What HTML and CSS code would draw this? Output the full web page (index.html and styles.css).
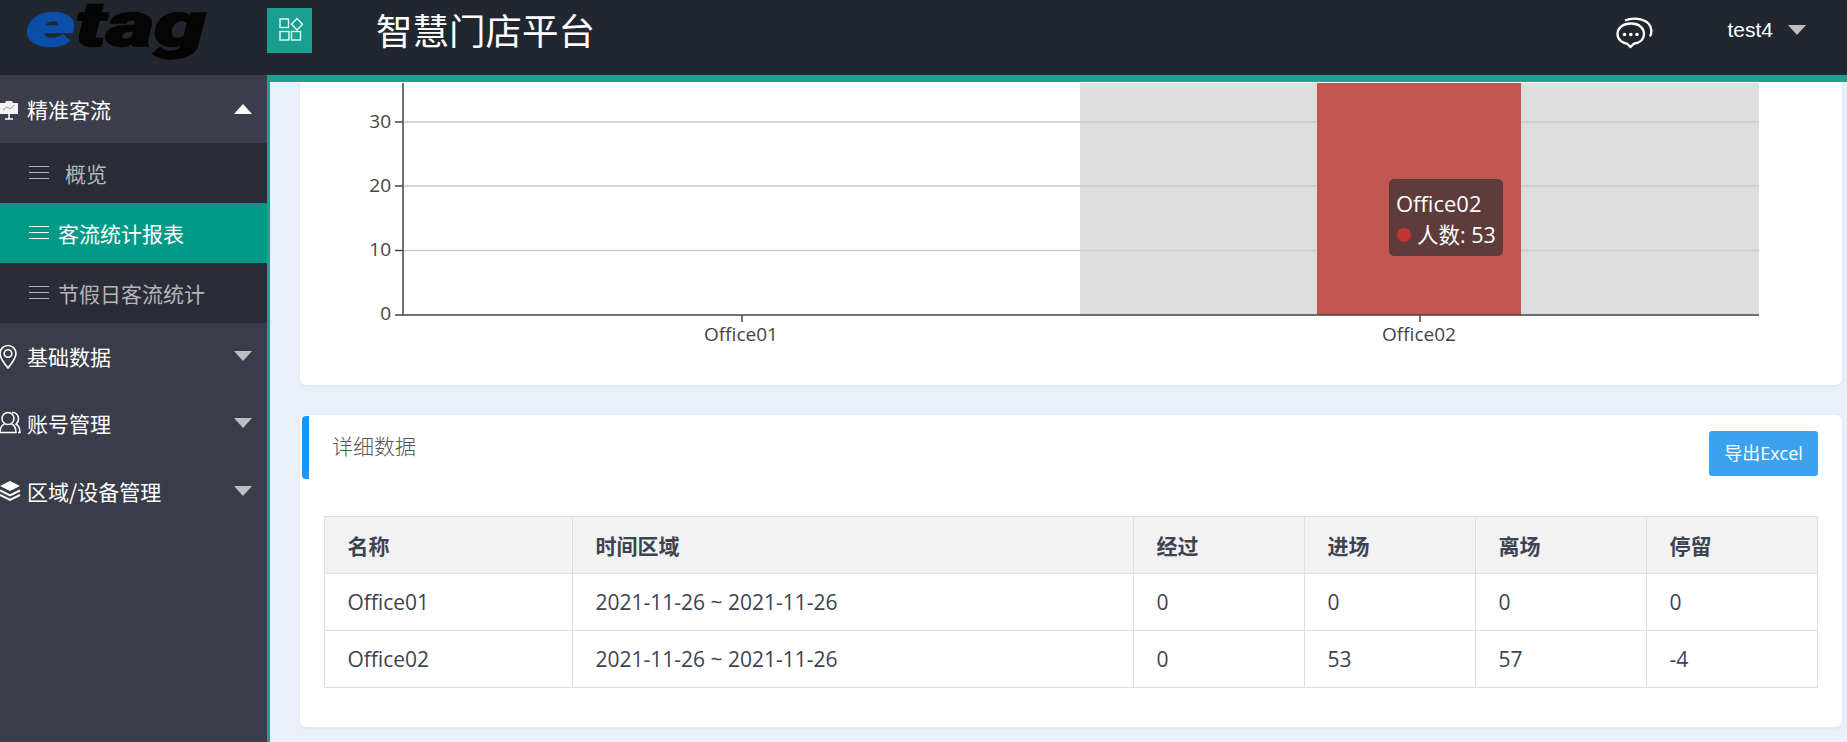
FILE: index.html
```html
<!DOCTYPE html>
<html lang="zh">
<head>
<meta charset="utf-8">
<title>智慧门店平台</title>
<link rel="stylesheet" href="styles.css">
</head>
<body>
<header class="topbar">
  <div class="logo"><div class="logo-word"><span class="logo-e">e</span>tag</div></div>
  <div class="apps">
    <svg class="apps-ico" width="26" height="26" viewBox="0 0 26 26" fill="none" stroke="#e4fff8" stroke-width="1.400"><rect x="2" y="3" width="8.500" height="8.500"/><path d="M19 2.500l5.500 5.800-5.500 5.800-5.500-5.800z"/><rect x="2" y="15.500" width="9" height="8.500"/><rect x="13.500" y="15.500" width="9" height="8.500"/></svg>
  </div>
  <div class="brand">智慧门店平台</div>
  <div class="top-right">
    <svg class="chat" width="37" height="32" viewBox="0 0 37 32" fill="none" stroke="#fff" stroke-width="2.300"><path d="M15 6.500C7 6.500 1.500 11 1.500 17c0 5.500 4.500 9 9.500 9.600l3.500 3.400 3.500-3.400c5.500-.8 10-4.200 10-9.600C28 11 23 6.500 15 6.500z"/><path d="M9 3.500C16 .5 27 1 32.500 6.500c3.500 4 3.500 9.500 1.500 13"/><circle cx="8.500" cy="17.500" r="1.800" fill="#fff" stroke="none"/><circle cx="14.800" cy="17.500" r="1.800" fill="#fff" stroke="none"/><circle cx="21" cy="17.500" r="1.800" fill="#fff" stroke="none"/></svg>
    <span class="user">test4</span>
    <span class="tri tri-down"></span>
  </div>
</header>
<div class="layout">
  <nav class="sidebar">
    <div class="nav-head nav-open">
      <svg class="nav-ico" width="22" height="22" viewBox="0 0 22 22"><path d="M1 5h5l1-2h6l1 2h5v11H1z" fill="#f4f4f4"/><path d="M4 12l4-3 3 2 5-4" fill="none" stroke="#999" stroke-width="1"/><path d="M10 15v6M6 21h8" stroke="#fff" stroke-width="1.500"/></svg>
      <span class="nav-text">精准客流</span>
      <span class="tri tri-up"></span>
    </div>
    <ul class="sub">
      <li class="sub-item"><span class="lines"></span><span class="sub-first">概览</span></li>
      <li class="sub-item sub-active"><span class="lines"></span><span>客流统计报表</span></li>
      <li class="sub-item"><span class="lines"></span><span>节假日客流统计</span></li>
    </ul>
    <div class="nav-head">
      <svg class="nav-ico" width="22" height="25" viewBox="0 0 22 25" fill="none" stroke="#fff" stroke-width="1.600"><path d="M9 24C4 18 1 14 1 9.500a8 8 0 0 1 16 0C17 14 14 18 9 24z"/><circle cx="9" cy="9.500" r="3.800"/></svg>
      <span class="nav-text">基础数据</span>
      <span class="tri tri-down"></span>
    </div>
    <div class="nav-head nav-account">
      <svg class="nav-ico" width="22" height="23" viewBox="0 0 22 23" fill="none" stroke="#fff" stroke-width="1.500"><circle cx="9" cy="7.500" r="6"/><path d="M5.500 13C3 14 1 16.500 1 21.500h16c0-5-2-7.500-4.500-8.500"/><path d="M13 1.500c3.500-.5 6.500 2.500 6.500 6 0 2.500-1 4.500-2.500 5.500 2.500 1.500 4 4 4 8.500h-2"/></svg>
      <span class="nav-text">账号管理</span>
      <span class="tri tri-down"></span>
    </div>
    <div class="nav-head">
      <svg class="nav-ico" width="22" height="22" viewBox="0 0 22 22"><path d="M11 1l10 5-10 5L1 6z" fill="#fff"/><path d="M1 10.500l10 5 10-5M1 15l10 5 10-5" fill="none" stroke="#fff" stroke-width="2"/></svg>
      <span class="nav-text">区域/设备管理</span>
      <span class="tri tri-down"></span>
    </div>
  </nav>
  <main class="main">
    <section class="card chart-card">
      <svg class="chart" width="1542" height="303" viewBox="300 82 1542 303">
        <rect x="1080" y="83" width="679" height="232" fill="#dedede"/>
        <g stroke="#c9c9c9" stroke-width="1.500">
          <path d="M404 122H1759M404 186H1759M404 250.500H1759"/>
        </g>
        <rect x="1317" y="83" width="204" height="232" fill="#c15652"/>
        <g stroke="#444" stroke-width="1.500" fill="none">
          <path d="M403 83V315.500M395 122H403M395 186H403M395 250.500H403M395 315H1759M742 315V322M1420 315V322"/>
        </g>
        <g class="axis-y">
          <text x="391" y="128">30</text>
          <text x="391" y="192">20</text>
          <text x="391" y="256">10</text>
          <text x="391" y="320">0</text>
        </g>
        <g class="axis-x">
          <text x="741" y="341">Office01</text>
          <text x="1419" y="341">Office02</text>
        </g>
      </svg>
      <div class="tooltip">
        <div>Office02</div>
        <div class="tip-row"><span class="dot"></span>人数: 53</div>
      </div>
    </section>
    <section class="card detail-card">
      <div class="detail-head">
        <h2 class="detail-title">详细数据</h2>
        <button class="export">导出Excel</button>
      </div>
      <table class="data">
        <colgroup><col class="c1"><col class="c2"><col class="c3"><col class="c3"><col class="c3"><col class="c3"></colgroup>
        <thead>
          <tr><th>名称</th><th>时间区域</th><th>经过</th><th>进场</th><th>离场</th><th>停留</th></tr>
        </thead>
        <tbody>
          <tr><td>Office01</td><td>2021-11-26 ~ 2021-11-26</td><td>0</td><td>0</td><td>0</td><td>0</td></tr>
          <tr><td>Office02</td><td>2021-11-26 ~ 2021-11-26</td><td>0</td><td>53</td><td>57</td><td>-4</td></tr>
        </tbody>
      </table>
    </section>
  </main>
</div>
</body>
</html>
```
FILE: styles.css
```css
* { box-sizing: border-box; }
html, body { margin: 0; height: 100%; overflow: hidden; }
body {
  font-family: "Open Sans", "Noto Sans CJK SC", sans-serif;
  background: #eaf0fa;
  color: #3c4353;
}
.topbar {
  height: 82px;
  background: #22262f;
  border-bottom: 7px solid #20a090;
  display: flex;
  align-items: flex-start;
}
.logo {
  width: 267px;
  height: 75px;
  padding-left: 26px;
}
.logo-word {
  width: 130px;
  font-family: "Roboto", "Liberation Sans", sans-serif;
  font-weight: 900;
  font-style: italic;
  font-size: 62px;
  line-height: 50px;
  color: #050506;
  -webkit-text-stroke: 1.500px currentColor;
  transform: scaleX(1.500);
  transform-origin: 0 0;
  white-space: nowrap;
}
.logo-e { color: #0a4ea8; }
.apps {
  width: 45px;
  height: 45px;
  margin-top: 8px;
  background: #1a9e8f;
  display: flex;
  align-items: center;
  justify-content: center;
}
.apps-ico { margin: 0 0 4px 2px; }
.brand {
  margin-left: 64px;
  font-family: "Noto Sans CJK SC", sans-serif;
  font-size: 36.500px;
  line-height: 60px;
  color: #fff;
}
.top-right {
  margin-left: auto;
  display: flex;
  align-items: center;
  height: 60px;
  padding-right: 41px;
}
.chat { margin: 5px 74px 0 0; }
.user {
  font-family: "Liberation Sans", sans-serif;
  font-size: 21px;
  color: #fff;
  margin-right: 15px;
}
.tri { width: 0; height: 0; border-left: 9px solid transparent; border-right: 9px solid transparent; }
.tri-down { border-top: 10px solid #bdbdc2; }
.tri-up { border-bottom: 10px solid #fff; }
.layout { display: flex; height: 660px; }
.sidebar {
  width: 270px;
  flex: none;
  background: #3a3d49;
  border-right: 3px solid #20a090;
  margin-top: -7px;
  height: 667px;
  font-family: "Noto Sans CJK SC", sans-serif;
}
.nav-head {
  height: 67.500px;
  display: flex;
  align-items: center;
  color: #fff;
  padding-right: 15px;
  font-size: 21px;
}
.nav-open { background: #3c3f4b; }
.nav-account { padding-bottom: 2px; }
.nav-ico { flex: none; margin-left: -1px; margin-right: 6px; }
.nav-text { flex: 1; }
.sub { list-style: none; margin: 0; padding: 0; background: #2a2c37; }
.sub-item {
  height: 60px;
  display: flex;
  align-items: center;
  padding-left: 29px;
  font-size: 21px;
  color: #b4b4b9;
}
.sub-active { background: #009a87; color: #fff; }
.lines {
  width: 20px;
  height: 13px;
  margin-right: 9px;
  border-top: 1px solid currentColor;
  border-bottom: 1px solid currentColor;
}
.lines::after {
  content: "";
  display: block;
  height: 1px;
  margin-top: 5px;
  background: currentColor;
}
.sub-first { margin-left: 7px; }
.main { flex: 1; min-width: 0; padding: 0 5px 0 30px; overflow: hidden; }
.card {
  background: #fff;
  border-radius: 0 0 6px 6px;
  box-shadow: 0 1px 3px rgba(40, 60, 100, .08);
}
.chart-card { position: relative; height: 303px; }
.chart { display: block; }
.axis-y text, .axis-x text {
  font-family: "Open Sans", sans-serif;
  font-size: 19px;
  fill: #444;
}
.axis-y text { text-anchor: end; }
.axis-x text { text-anchor: middle; }
.tooltip {
  position: absolute;
  left: 1089px;
  top: 97px;
  width: 114px;
  height: 77px;
  padding: 8px 7px;
  border-radius: 5px;
  background: rgba(50, 50, 50, .7);
  color: #fff;
  font-size: 22px;
  line-height: 32px;
  white-space: nowrap;
}
.tip-row { display: flex; align-items: center; font-size: 21.500px; }
.dot { flex: none; width: 14px; height: 14px; border-radius: 50%; background: #c23531; margin: 0 6px 0 1px; }
.detail-card {
  margin-top: 30px;
  height: 312px;
  border-radius: 6px;
  padding: 16px 24px 0;
}
.detail-head {
  position: relative;
  height: 85px;
  display: flex;
  justify-content: space-between;
  align-items: flex-start;
}
.detail-head::before {
  content: "";
  position: absolute;
  left: -22px;
  top: -15px;
  width: 7px;
  height: 63px;
  background: #1f94ee;
  border-radius: 4px 0 0 4px;
}
.detail-title {
  margin: 0 0 0 8px;
  font-size: 21px;
  font-weight: 300;
  line-height: 29px;
  color: #555;
  font-family: "Noto Sans CJK SC", sans-serif;
}
.export {
  width: 109px;
  height: 45px;
  border: 0;
  border-radius: 3px;
  background: #3ba2f0;
  color: #fff;
  font-size: 18px;
  font-family: "Open Sans", "Noto Sans CJK SC", sans-serif;
  padding: 0 0 3px;
}
.data {
  width: 1494px;
  table-layout: fixed;
  border-collapse: collapse;
  font-size: 21px;
}
.c1 { width: 248px; }
.c2 { width: 561px; }
.c3 { width: 171px; }
.data th, .data td {
  height: 57px;
  padding: 0 22.500px;
  border: 1px solid #dedede;
  text-align: left;
}
.data th {
  background: #f2f2f2;
  font-size: 21px;
  font-weight: 700;
  font-family: "Noto Sans CJK SC", sans-serif;
}
```
